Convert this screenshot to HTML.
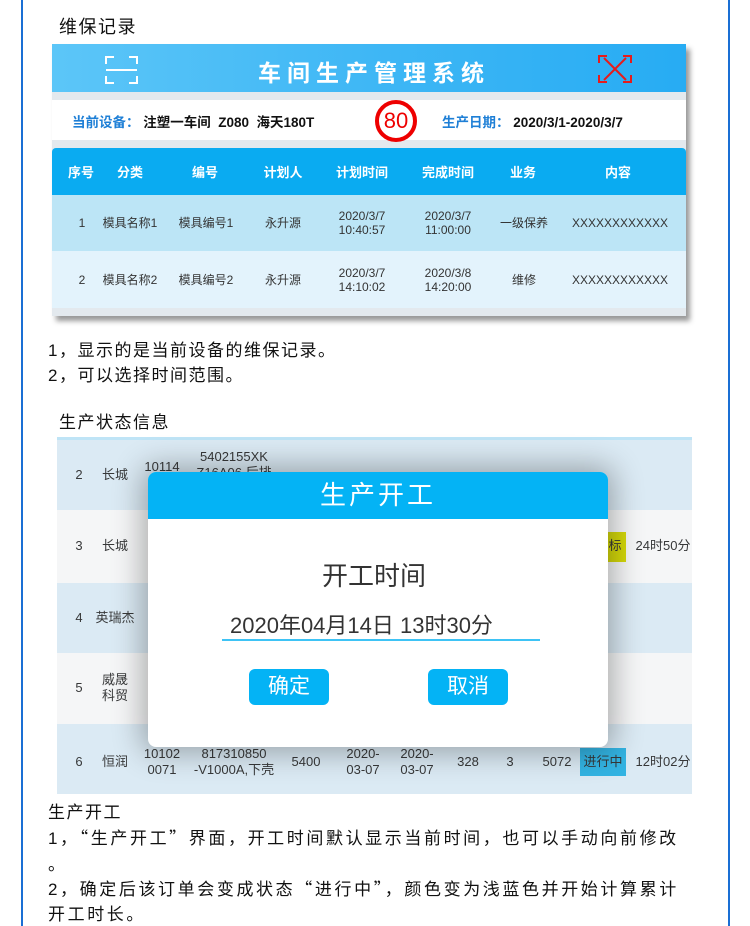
<!DOCTYPE html>
<html><head><meta charset="utf-8"><style>
*{margin:0;padding:0;box-sizing:border-box}
body{width:750px;height:926px;background:#fff;position:relative;overflow:hidden;font-family:"Liberation Sans","Noto Sans CJK SC",sans-serif;color:#111}
.a{position:absolute;white-space:nowrap}
.vl{position:absolute;top:0;width:2px;height:926px;background:#1a6fd4}
.t{font-size:17px;letter-spacing:1.5px}
.b{font-size:17px;letter-spacing:2.6px}
.d{position:absolute;font-size:13px;color:#333;line-height:16px;white-space:nowrap;transform:translate(-50%,-50%);text-align:center}
</style></head><body>
<div class="vl" style="left:21px"></div>
<div class="vl" style="left:728px"></div>
<div class="a t" style="left:59px;top:13px;font-size:18px">维保记录</div>

<div class="a" style="left:52px;top:44px;width:634px;height:272px;background:#e3e9ee;box-shadow:4px 5px 5px #999"></div>
<div class="a" style="left:52px;top:44px;width:634px;height:48px;background:linear-gradient(90deg,#5cc6f8,#3fb7f5 50%,#27acf3)"></div>
<svg class="a" style="left:105px;top:56px" width="34" height="28"><path d="M1 8V1h8M24 1h8v7M1 20v7h8M24 27h8v-7M1 14h31" stroke="#fff" stroke-width="2" fill="none"/></svg>
<svg class="a" style="left:598px;top:55px" width="34" height="28"><path d="M1 8V1h8M25 1h8v7M1 20v7h8M25 27h8v-7M6 3L28 25M28 3L6 25" stroke="#e51c1c" stroke-width="2" fill="none"/></svg>
<div class="a" style="left:258px;top:54px;font-size:23px;color:#fff;letter-spacing:6px;font-weight:bold">车间生产管理系统</div>
<div class="a" style="left:52px;top:100px;width:634px;height:40px;background:#fff"></div>
<div class="a" style="left:72px;top:111px;font-size:13.5px;font-weight:bold"><span style="color:#1e7fd6">当前设备：</span> 注塑一车间 &nbsp;Z080 &nbsp;海天180T</div>
<div class="a" style="left:375px;top:100px;width:42px;height:42px;border:4px solid #e00;border-radius:50%;color:#e00;font-size:22px;text-align:center;line-height:34px;background:#fff">80</div>
<div class="a" style="left:442px;top:111px;font-size:13.5px;font-weight:bold"><span style="color:#1e7fd6">生产日期：</span> 2020/3/1-2020/3/7</div>
<div class="a" style="left:52px;top:148px;width:634px;height:47px;background:#0aabf1;border-radius:4px 4px 0 0"></div>
<div class="a" style="left:52px;top:195px;width:634px;height:56px;background:#bce5f6"></div>
<div class="a" style="left:52px;top:251px;width:634px;height:57px;background:#e3f3fc"></div>
<div class="d" style="left:81px;top:173px;color:#fff;font-size:13px;font-weight:bold">序号</div>
<div class="d" style="left:130px;top:173px;color:#fff;font-size:13px;font-weight:bold">分类</div>
<div class="d" style="left:205px;top:173px;color:#fff;font-size:13px;font-weight:bold">编号</div>
<div class="d" style="left:283px;top:173px;color:#fff;font-size:13px;font-weight:bold">计划人</div>
<div class="d" style="left:362px;top:173px;color:#fff;font-size:13px;font-weight:bold">计划时间</div>
<div class="d" style="left:448px;top:173px;color:#fff;font-size:13px;font-weight:bold">完成时间</div>
<div class="d" style="left:523px;top:173px;color:#fff;font-size:13px;font-weight:bold">业务</div>
<div class="d" style="left:618px;top:173px;color:#fff;font-size:13px;font-weight:bold">内容</div>
<div class="d" style="left:82px;top:223px;font-size:12px">1</div><div class="d" style="left:130px;top:223px;font-size:12px">模具名称1</div><div class="d" style="left:206px;top:223px;font-size:12px">模具编号1</div><div class="d" style="left:283px;top:223px;font-size:12px">永升源</div><div class="d" style="left:362px;top:223px;font-size:12px;line-height:14px">2020/3/7<br>10:40:57</div><div class="d" style="left:448px;top:223px;font-size:12px;line-height:14px">2020/3/7<br>11:00:00</div><div class="d" style="left:524px;top:223px;font-size:12px">一级保养</div><div class="d" style="left:620px;top:223px;font-size:12px">XXXXXXXXXXXX</div>
<div class="d" style="left:82px;top:280px;font-size:12px">2</div><div class="d" style="left:130px;top:280px;font-size:12px">模具名称2</div><div class="d" style="left:206px;top:280px;font-size:12px">模具编号2</div><div class="d" style="left:283px;top:280px;font-size:12px">永升源</div><div class="d" style="left:362px;top:280px;font-size:12px;line-height:14px">2020/3/7<br>14:10:02</div><div class="d" style="left:448px;top:280px;font-size:12px;line-height:14px">2020/3/8<br>14:20:00</div><div class="d" style="left:524px;top:280px;font-size:12px">维修</div><div class="d" style="left:620px;top:280px;font-size:12px">XXXXXXXXXXXX</div>

<div class="a t" style="left:48px;top:336px">1，显示的是当前设备的维保记录。</div>
<div class="a t" style="left:48px;top:361px">2，可以选择时间范围。</div>
<div class="a t" style="left:59px;top:408px">生产状态信息</div>

<div class="a" style="left:57px;top:437px;width:635px;height:3px;background:#bfe4f6"></div>
<div class="a" style="left:57px;top:440px;width:635px;height:70px;background:#e3f3fc"></div>
<div class="a" style="left:57px;top:510px;width:635px;height:73px;background:#fff"></div>
<div class="a" style="left:57px;top:583px;width:635px;height:70px;background:#e3f3fc"></div>
<div class="a" style="left:57px;top:653px;width:635px;height:71px;background:#fff"></div>
<div class="a" style="left:57px;top:724px;width:635px;height:70px;background:#e3f3fc"></div>
<div class="d" style="left:79px;top:475px">2</div><div class="d" style="left:115px;top:475px">长城</div>
<div class="d" style="left:162px;top:475px">10114<br>0</div><div class="d" style="left:234px;top:465px">5402155XK<br>Z16A06 后排</div>
<div class="d" style="left:79px;top:546px">3</div><div class="d" style="left:115px;top:546px">长城</div>
<div class="d" style="left:79px;top:618px">4</div><div class="d" style="left:115px;top:618px">英瑞杰</div>
<div class="d" style="left:79px;top:688px">5</div><div class="d" style="left:115px;top:688px">威晟<br>科贸</div>
<div class="a" style="left:606px;top:532px;width:20px;height:30px;background:#dde000"></div>
<div class="d" style="left:615px;top:546px">标</div><div class="d" style="left:663px;top:546px">24时50分</div>
<div class="d" style="left:79px;top:762px">6</div><div class="d" style="left:115px;top:762px">恒润</div>
<div class="d" style="left:162px;top:762px">10102<br>0071</div><div class="d" style="left:234px;top:762px">817310850<br>-V1000A,下壳</div>
<div class="d" style="left:306px;top:762px">5400</div><div class="d" style="left:363px;top:762px">2020-<br>03-07</div><div class="d" style="left:417px;top:762px">2020-<br>03-07</div>
<div class="d" style="left:468px;top:762px">328</div><div class="d" style="left:510px;top:762px">3</div><div class="d" style="left:557px;top:762px">5072</div>
<div class="a" style="left:580px;top:748px;width:46px;height:28px;background:#2fb8ea"></div>
<div class="d" style="left:603px;top:762px">进行中</div><div class="d" style="left:663px;top:762px">12时02分</div>
<div class="a" style="left:57px;top:440px;width:635px;height:354px;background:rgba(120,130,140,0.07)"></div>

<div class="a" style="left:148px;top:472px;width:460px;height:275px;background:#fff;border-radius:8px;box-shadow:0 0 30px 6px rgba(0,0,0,0.3);overflow:hidden">
<div style="height:47px;background:#04b3f5;color:#fff;font-size:26px;text-align:center;line-height:47px;letter-spacing:3px">生产开工</div>
</div>
<div class="a" style="left:322px;top:556px;font-size:26px;color:#333">开工时间</div>
<div class="a" style="left:230px;top:608px;font-size:22px;color:#333">2020年04月14日 13时30分</div>
<div class="a" style="left:222px;top:639px;width:318px;height:2px;background:#3ec3f5"></div>
<div class="a" style="left:249px;top:669px;width:80px;height:36px;background:#04b3f5;border-radius:6px;color:#fff;font-size:21px;text-align:center;line-height:36px">确定</div>
<div class="a" style="left:428px;top:669px;width:80px;height:36px;background:#04b3f5;border-radius:6px;color:#fff;font-size:21px;text-align:center;line-height:36px">取消</div>

<div class="a t" style="left:48px;top:798px">生产开工</div>
<div class="a b" style="left:48px;top:824px">1，<span style="font-family:'Noto Sans CJK SC',sans-serif">“</span>生产开工<span style="font-family:'Noto Sans CJK SC',sans-serif">”</span>界面，开工时间默认显示当前时间，也可以手动向前修改</div>
<div class="a b" style="left:48px;top:850px">。</div>
<div class="a b" style="left:48px;top:875px">2，确定后该订单会变成状态<span style="font-family:'Noto Sans CJK SC',sans-serif">“</span>进行中<span style="font-family:'Noto Sans CJK SC',sans-serif">”</span>，颜色变为浅蓝色并开始计算累计</div>
<div class="a b" style="left:48px;top:900px">开工时长。</div>
</body></html>
